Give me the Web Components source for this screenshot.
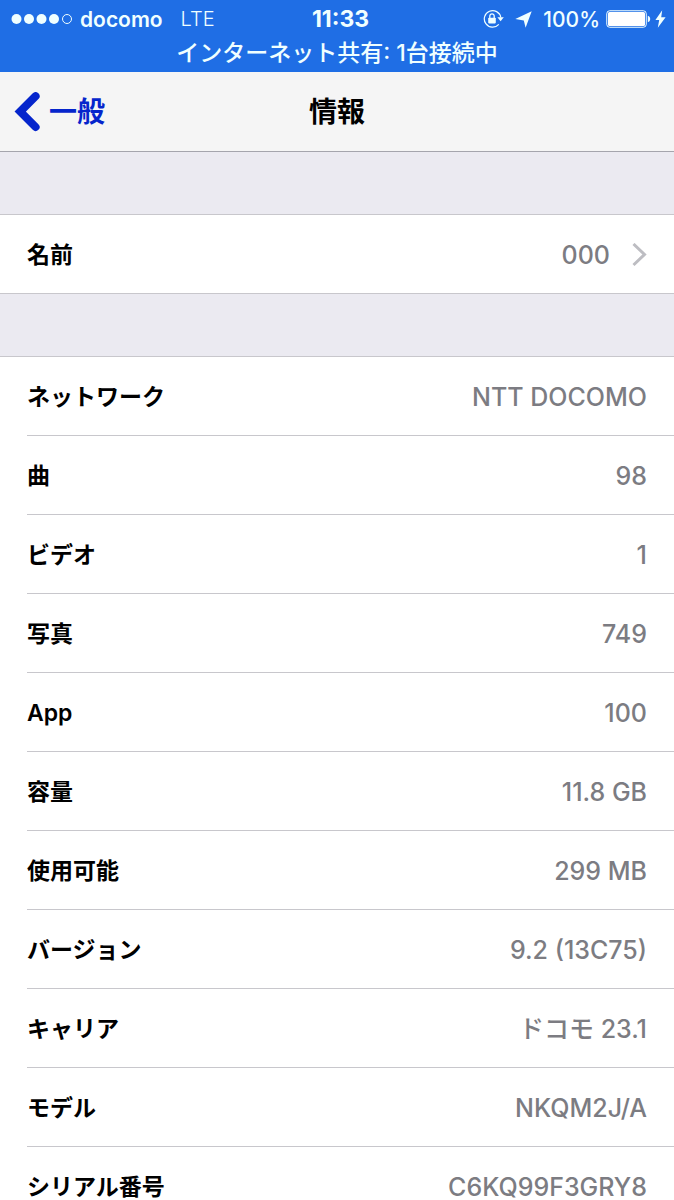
<!DOCTYPE html>
<html lang="ja">
<head>
<meta charset="utf-8">
<meta name="viewport" content="width=device-width, initial-scale=1">
<title>情報</title>
<style>
  :root {
    --bar: #1f6ee5;
    --bar-text: #f0ffff;
    --tint: #0525cc;
    --nav: #f5f5f5;
    --page: #ebeaf1;
    --line: #c8c7cc;
    --muted: #7c7c82;
    --font: Inter, "Noto Sans CJK JP", sans-serif;
  }
  body {
    margin: 0;
    background: var(--page);
    font-family: var(--font);
  }
</style>
</head>
<body>
<settings-screen>
  <status-bar slot="top" carrier="docomo" network="LTE" time="11:33" battery="100%">インターネット共有: 1台接続中</status-bar>
  <nav-bar slot="top" back="一般">情報</nav-bar>
  <info-group>
    <info-row label="名前" href="#name">000</info-row>
  </info-group>
  <info-group>
    <info-row label="ネットワーク">NTT DOCOMO</info-row>
    <info-row label="曲">98</info-row>
    <info-row label="ビデオ">1</info-row>
    <info-row label="写真">749</info-row>
    <info-row label="App">100</info-row>
    <info-row label="容量">11.8 GB</info-row>
    <info-row label="使用可能">299 MB</info-row>
    <info-row label="バージョン">9.2 (13C75)</info-row>
    <info-row label="キャリア">ドコモ 23.1</info-row>
    <info-row label="モデル">NKQM2J/A</info-row>
    <info-row label="シリアル番号">C6KQ99F3GRY8</info-row>
  </info-group>
</settings-screen>

<script>
class SettingsScreen extends HTMLElement {
  constructor() {
    super();
    this.attachShadow({ mode: 'open' });
    this.shadowRoot.innerHTML = `
      <style>
        :host{display:flex; flex-direction:column; height:100vh}
        main{
          flex:1;
          min-height:0;
          overflow-y:auto;
          scrollbar-width:none;
        }
      </style>
      <slot name="top"></slot>
      <main><slot></slot></main>
    `;
  }
}

class StatusBar extends HTMLElement {
  constructor() {
    super();
    this.attachShadow({ mode: 'open' });
  }

  connectedCallback() {
    const attr = (name) => this.getAttribute(name) || '';

    this.shadowRoot.innerHTML = `
      <style>
        :host{
          display:block;
          box-sizing:border-box;
          height:72px;
          padding-top:2px;
          background:var(--bar);
          color:var(--bar-text);
        }
        svg{display:block; flex:none}
        .line{
          display:grid;
          grid-template-columns:1fr auto 1fr;
          align-items:center;
          height:34px;
          padding:0 8px 0 11px;
          font-size:21px;
          font-weight:500;
        }
        .side{display:flex; align-items:center}
        .end{justify-content:flex-end}
        .carrier{margin-left:8px; font-weight:600}
        .network{margin-left:18px; font-size:20px; font-weight:300}
        .time{margin-left:4px; font-size:23px; font-weight:700}
        .lock{margin-right:11px}
        .arrow{margin-right:11px}
        .battery{margin:0 4px 0 6px}
        .notice{
          height:34px;
          line-height:34px;
          font-size:23px;
          font-weight:500;
          text-align:center;
        }
      </style>
      <div class="line">
        <div class="side">
          <svg width="61" height="12" viewBox="0 0 61 12" fill="currentColor" aria-hidden="true">
            <circle cx="5.5" cy="6" r="5"/>
            <circle cx="18" cy="6" r="5"/>
            <circle cx="30.5" cy="6" r="5"/>
            <circle cx="43" cy="6" r="5"/>
            <circle cx="56" cy="6" r="4.5" fill="none" stroke="currentColor"/>
          </svg>
          <span class="carrier">${attr('carrier')}</span>
          <span class="network">${attr('network')}</span>
        </div>
        <span class="time">${attr('time')}</span>
        <div class="side end">
          <svg class="lock" width="21" height="20" viewBox="0 0 21 20" fill="none" stroke="currentColor" aria-hidden="true">
            <path d="M15.8 15.4A8.3 8.3 0 1 1 17.8 8.5" stroke-width="1.2"/>
            <path d="M14.4 8.2h6.4l-3.2 4z" fill="currentColor" stroke="none"/>
            <rect x="5.2" y="8.8" width="7.6" height="5.6" rx=".8" fill="currentColor" stroke="none"/>
            <path d="M6.8 9V7.1a2.2 2.2 0 0 1 4.4 0V9" stroke-width="1.3"/>
          </svg>
          <svg class="arrow" width="17" height="17" viewBox="0 0 17 17" fill="currentColor" aria-hidden="true">
            <path d="M16.7.3 10.6 16.7 8.8 9.4.3 8z"/>
          </svg>
          <span>${attr('battery')}</span>
          <svg class="battery" width="45" height="18" viewBox="0 0 45 18" aria-hidden="true">
            <rect x=".75" y=".75" width="39.5" height="16.5" rx="3" fill="none" stroke="currentColor"/>
            <rect x="2" y="2" width="37" height="14" rx="1.5" fill="#fff"/>
            <path d="M41.8 5.8c3.2.8 3.2 5.6 0 6.4z" fill="currentColor"/>
          </svg>
          <svg width="11" height="18" viewBox="0 0 11 18" fill="currentColor" aria-hidden="true">
            <path d="M7.2.2.4 10h3.8L2.8 17.8 10.6 7.2H6.2z"/>
          </svg>
        </div>
      </div>
      <div class="notice"><slot></slot></div>
    `;
  }
}

class NavBar extends HTMLElement {
  constructor() {
    super();
    this.attachShadow({ mode: 'open' });
  }

  connectedCallback() {
    this.shadowRoot.innerHTML = `
      <style>
        :host{
          display:grid;
          grid-template-columns:1fr auto 1fr;
          align-items:center;
          box-sizing:border-box;
          height:80px;
          padding:1px 14px 0;
          background:var(--nav);
          border-bottom:1px solid #a5a5ad;
          line-height:36px;
        }
        a{
          display:flex;
          align-items:center;
          justify-self:start;
          gap:9px;
          color:var(--tint);
          font-size:28px;
          font-weight:600;
          text-decoration:none;
        }
        svg{display:block}
        h1{margin:0; font-size:28px; font-weight:700}
      </style>
      <a href="#general">
        <svg width="26" height="40" viewBox="0 0 26 40" fill="none" stroke="currentColor" stroke-width="8" stroke-linecap="round" aria-hidden="true">
          <path d="M21.6 4.2 6.2 19.6 21.6 35"/>
        </svg>
        <span>${this.getAttribute('back') || ''}</span>
      </a>
      <h1><slot></slot></h1>
    `;
  }
}

class InfoGroup extends HTMLElement {
  constructor() {
    super();
    this.attachShadow({ mode: 'open' });
    this.shadowRoot.innerHTML = `
      <style>
        :host{
          display:block;
          margin-top:62px;
          background:#fff;
          border-top:1px solid var(--line);
          border-bottom:1px solid var(--line);
        }
        ::slotted(:last-child){--row-line:transparent; margin-bottom:-1px}
      </style>
      <slot></slot>
    `;
    this.setAttribute('role', 'list');
  }
}

class InfoRow extends HTMLElement {
  constructor() {
    super();
    this.attachShadow({ mode: 'open' });
  }

  connectedCallback() {
    const href = this.getAttribute('href');
    const tag = href ? 'a' : 'div';

    this.setAttribute('role', 'listitem');
    this.shadowRoot.innerHTML = `
      <style>
        :host{display:block; padding-left:27px}
        .row{
          display:flex;
          align-items:center;
          box-sizing:border-box;
          height:79px;
          padding:2px 27px 0 0;
          border-bottom:1px solid var(--row-line, var(--line));
          color:#000;
          font-size:25px;
          line-height:30px;
          text-decoration:none;
        }
        .label{flex:1; font-weight:600; font-size:23px}
        .value{color:var(--muted); font-weight:500}
        svg{display:block; margin-left:22px}
      </style>
      <${tag} class="row" ${href ? `href="${href}"` : ''}>
        <span class="label">${this.getAttribute('label') || ''}</span>
        <span class="value"><slot></slot></span>
        ${href ? `
        <svg width="15" height="24" viewBox="0 0 15 24" fill="none" stroke="#bdbdc2" stroke-width="3" aria-hidden="true">
          <path d="M1.5 1 12.5 11.5 1.5 22"/>
        </svg>` : ''}
      </${tag}>
    `;
  }
}

customElements.define('settings-screen', SettingsScreen);
customElements.define('status-bar', StatusBar);
customElements.define('nav-bar', NavBar);
customElements.define('info-group', InfoGroup);
customElements.define('info-row', InfoRow);
</script>
</body>
</html>
